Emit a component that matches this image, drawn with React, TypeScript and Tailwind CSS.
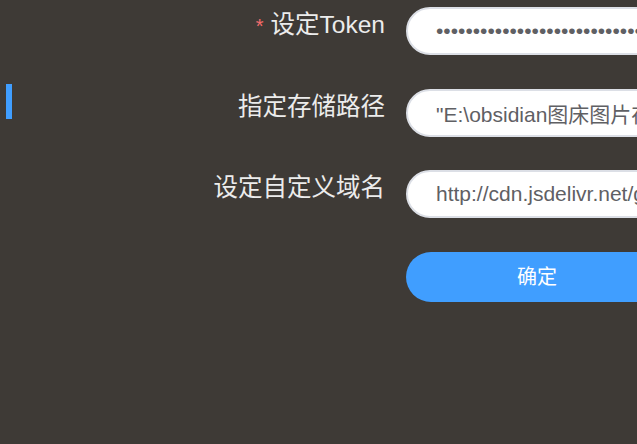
const font = "font-['Liberation_Sans','Noto_Sans_CJK_SC',sans-serif]";

function Row({
  label,
  required,
  children,
}: {
  label: string;
  required?: boolean;
  children: React.ReactNode;
}) {
  return (
    <div className="flex items-start gap-[21px]">
      <label className="w-[373px] shrink-0 text-right text-[24.5px] leading-[36px] text-[#ececec]">
        {required && <span className="mr-[7px] text-[20px] text-[#f56c6c]">*</span>}
        {label}
      </label>
      {children}
    </div>
  );
}

function TextInput({ value, type = "text" }: { value: string; type?: string }) {
  return (
    <input
      type={type}
      readOnly
      value={value}
      className={`h-[48px] w-[280px] shrink-0 rounded-full border-2 border-[#dcdfe6] bg-white pl-[28px] text-[21px] text-[#5f6064] outline-none ${font}`}
    />
  );
}

export default function App() {
  return (
    <div className={`flex h-[444px] w-full overflow-hidden bg-[#3e3a36] ${font}`}>
      {/* active tab marker */}
      <div className="ml-[6px] mt-[84px] h-[35px] w-[6px] shrink-0 bg-[#409eff]" />

      <div className="flex flex-col gap-[33.5px] pt-[7px]">
        <Row label="设定Token" required>
          <TextInput type="password" value="ghp_xxxxxxxxxxxxxxxxxxxxxxxxxxxxxxxxxxxxxx" />
        </Row>
        <Row label="指定存储路径">
          <TextInput value={'"E:\\obsidian图床图片存储"'} />
        </Row>
        <Row label="设定自定义域名">
          <TextInput value="http://cdn.jsdelivr.net/gh/user/repo" />
        </Row>
        <div className="flex gap-[21px]">
          <div className="w-[373px] shrink-0" />
          <button
            type="button"
            className="h-[50px] w-[262px] shrink-0 rounded-full bg-[#409eff] text-[20px] text-white"
          >
            确定
          </button>
        </div>
      </div>
    </div>
  );
}
